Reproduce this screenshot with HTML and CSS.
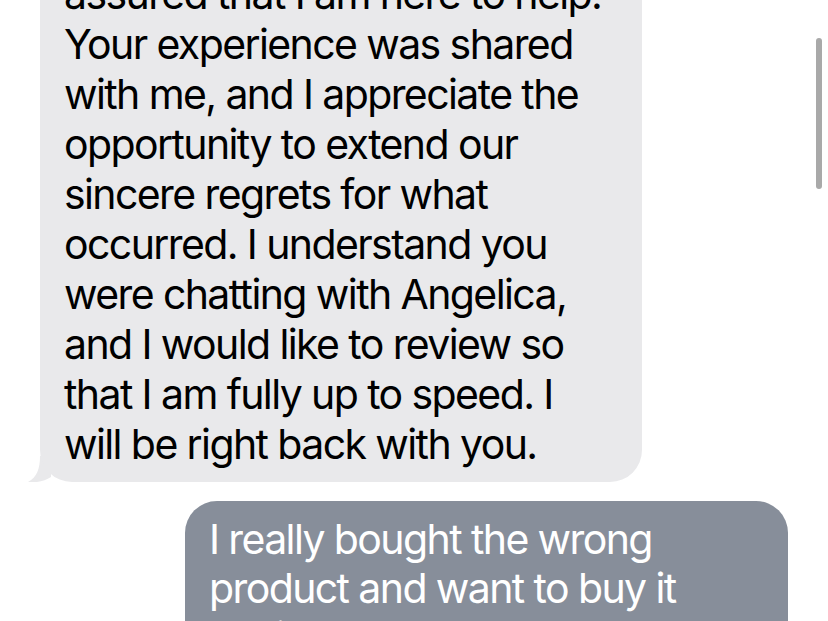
FILE: index.html
```html
<!DOCTYPE html>
<html>
<head>
<meta charset="utf-8">
<link rel="stylesheet" href="styles.css">
</head>
<body>
<div class="thread">
  <div class="msg msg-in">
    <p class="bubble bubble-in">assured that I am here to help.<br>Your experience was shared<br>with me, and I appreciate the<br>opportunity to extend our<br>sincere regrets for what<br>occurred. I understand you<br>were chatting with Angelica,<br>and I would like to review so<br>that I am fully up to speed. I<br>will be right back with you.</p>
    <svg class="tail" viewBox="0 0 30 30" width="30" height="30"><path d="M12 4 C12 17 9 25 0 30 C9 31 17 29 23 25 L23 4 Z" fill="#e9e9eb"/></svg>
  </div>
  <div class="msg msg-out">
    <p class="bubble bubble-out">I really bought the wrong<br>product and want to buy it<br>again</p>
  </div>
</div>
<div class="scrollbar"></div>
</body>
</html>
```
FILE: styles.css
```css
html, body {
  margin: 0;
  padding: 0;
  background: #ffffff;
  overflow: hidden;
  height: 621px;
}
body {
  font-family: Inter, "Liberation Sans", sans-serif;
  position: relative;
}
.thread {
  display: flex;
  flex-direction: column;
  gap: 19px;
  margin-top: -43px;
}
.msg {
  position: relative;
  display: flex;
}
.msg-in {
  padding-left: 40px;
}
.msg-out {
  padding-left: 185px;
}
.bubble {
  margin: 0;
  font-size: 41px;
  letter-spacing: -1.6px;
  line-height: 50px;
  white-space: nowrap;
  border-radius: 32px;
  box-sizing: border-box;
}
.bubble-in {
  position: relative;
  z-index: 1;
  width: 602px;
  padding: 12px 24px 13px 24px;
  background: #e9e9eb;
  color: #000000;
}
.bubble-out {
  width: 603px;
  padding: 14px 24px 13px 24px;
  background: #878e9a;
  color: #ffffff;
  line-height: 49px;
}
.tail {
  position: absolute;
  left: 28px;
  bottom: 0;
  z-index: 0;
}
.scrollbar {
  position: absolute;
  left: 816px;
  top: 38px;
  width: 6px;
  height: 151px;
  border-radius: 3px;
  background: #a9a9a9;
}
```
